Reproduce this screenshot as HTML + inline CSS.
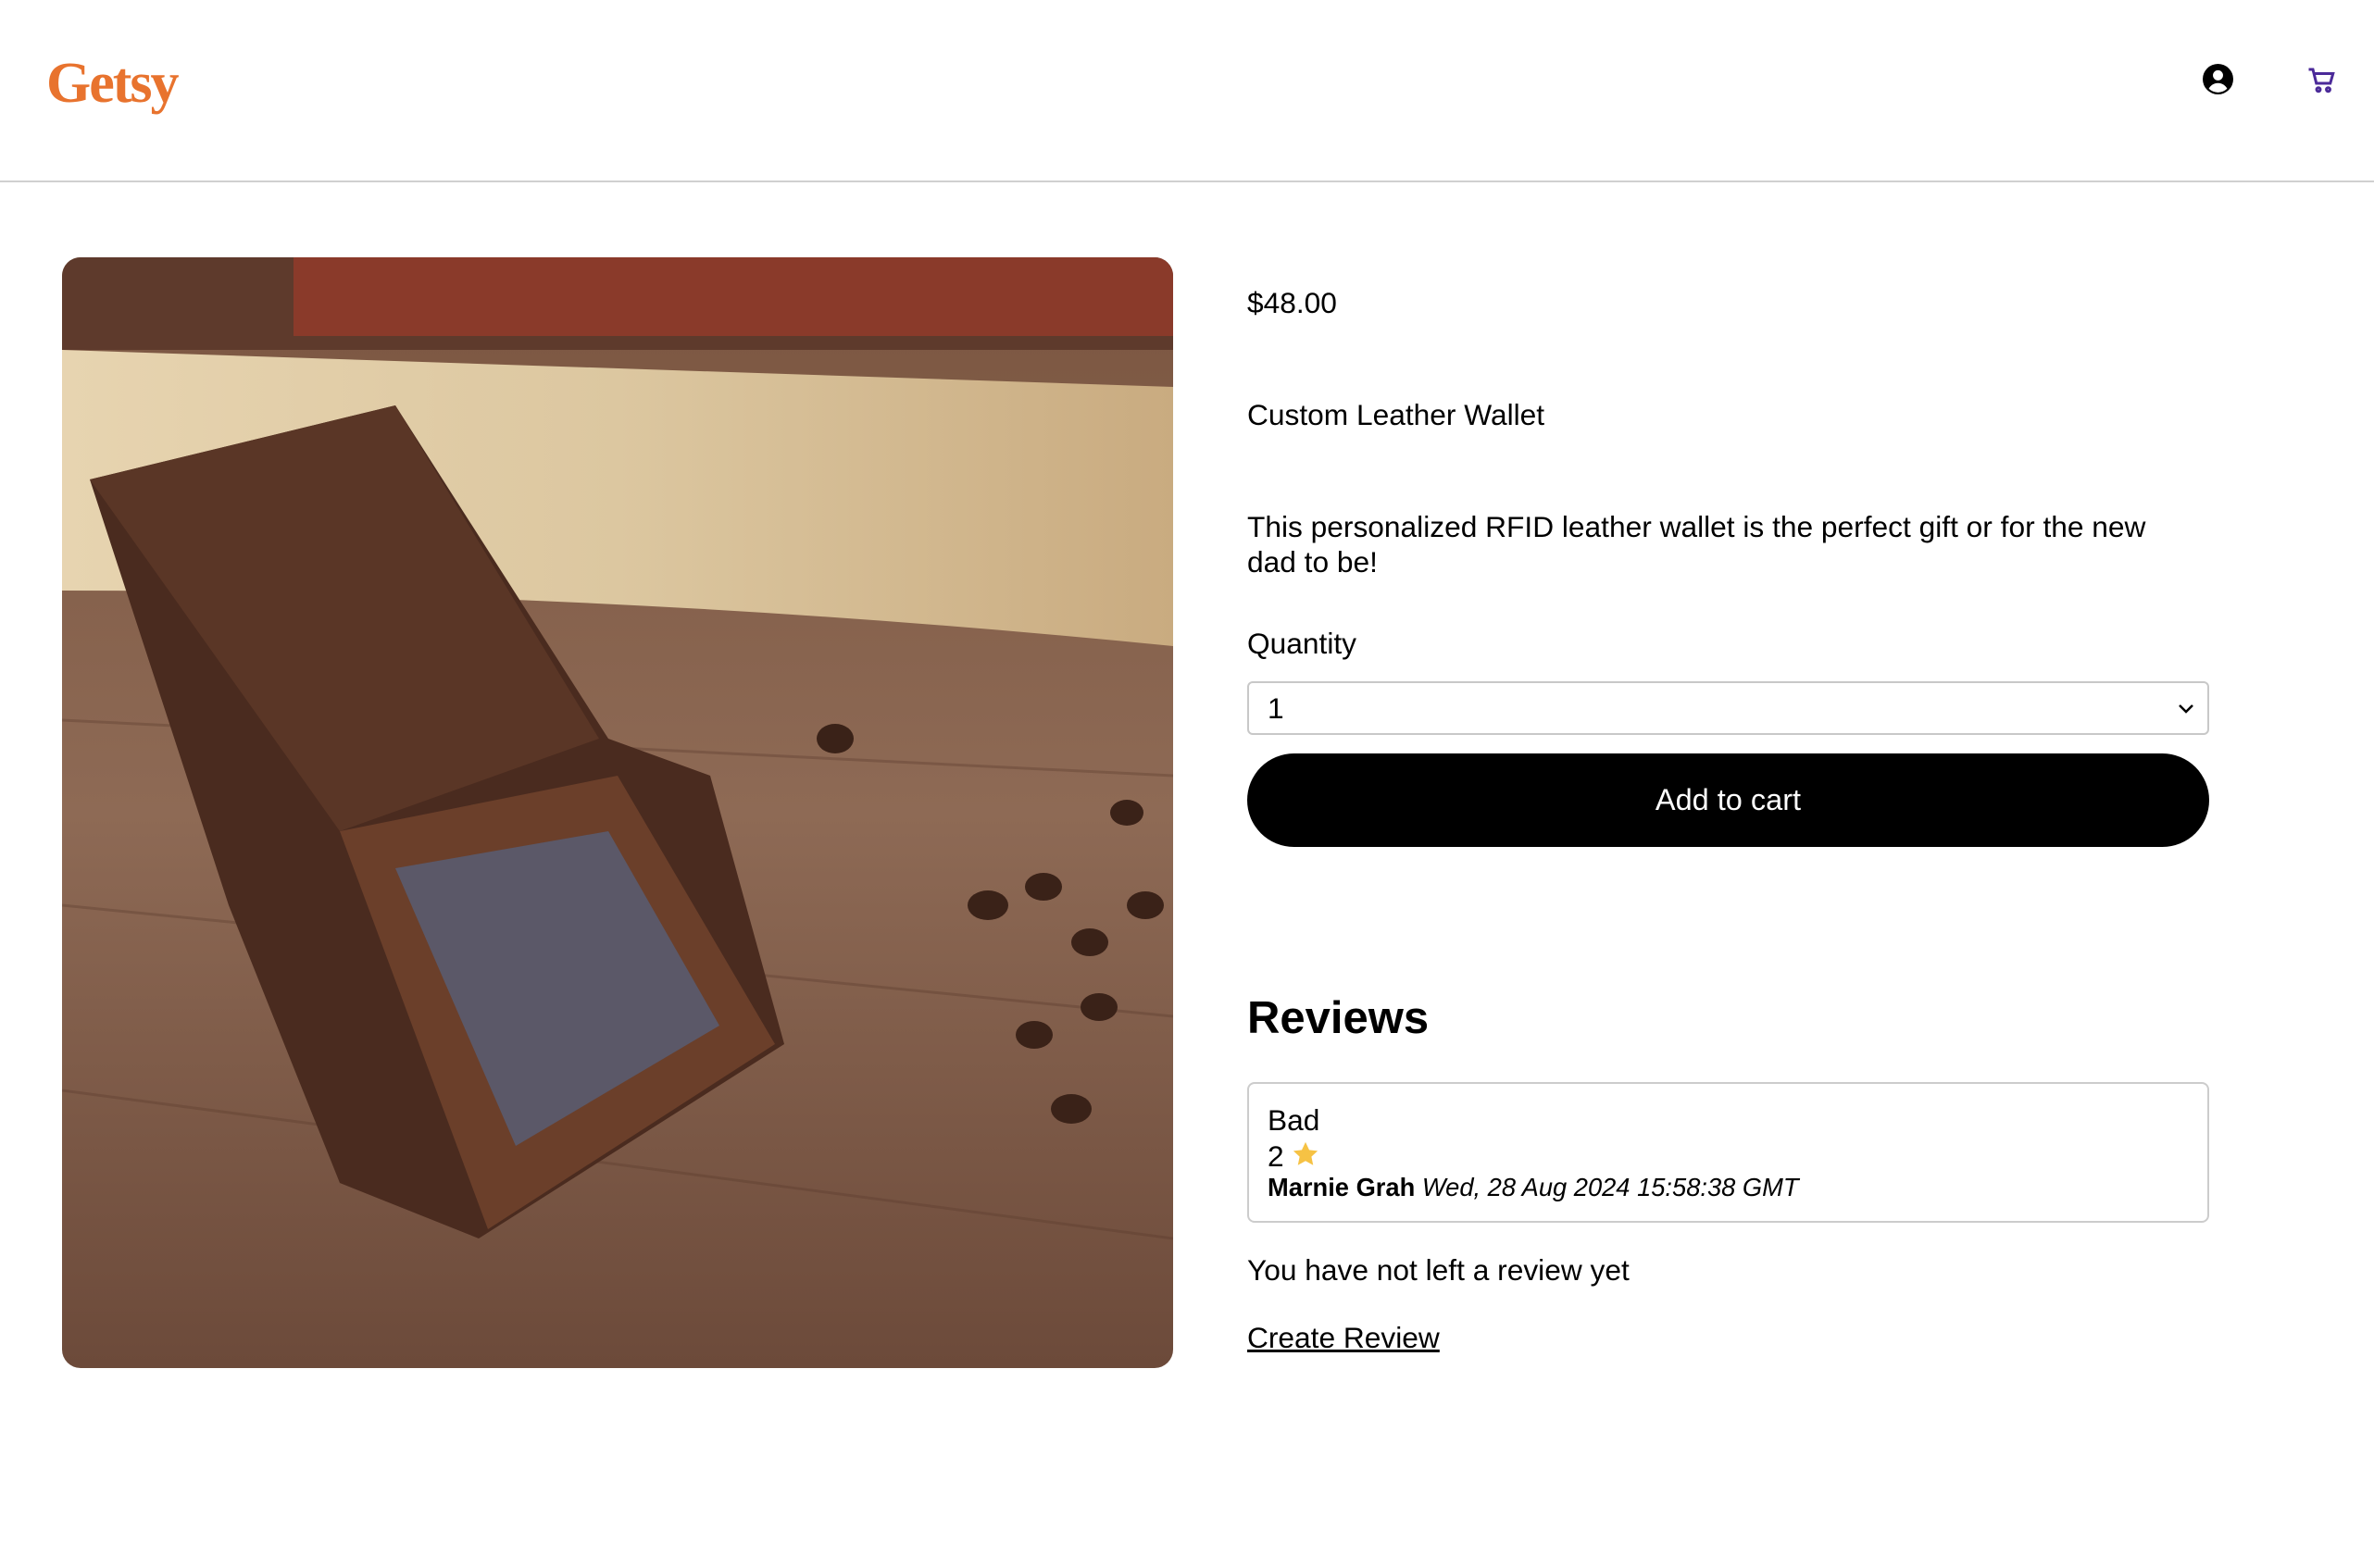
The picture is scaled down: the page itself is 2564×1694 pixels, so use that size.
<!DOCTYPE html>
<html><head><meta charset="utf-8"><style>
*{margin:0;padding:0;box-sizing:border-box}
body{width:2564px;height:1694px;background:#fff;font-family:"Liberation Sans",Arial,sans-serif;color:#000;position:relative;overflow:hidden}
.abs{position:absolute}
.logo{left:50px;top:55px;font-family:"Liberation Serif",serif;font-weight:bold;font-size:62px;color:#e8732e;letter-spacing:-2px}
.hr{left:0;top:195px;width:2564px;height:2px;background:#d0d0d0}
.t{font-size:31.7px;line-height:38px;white-space:nowrap}
.sel{left:1347px;top:736px;width:1039px;height:58px;border:2px solid #c8c8c8;border-radius:6px}
.btn{left:1347px;top:814px;width:1039px;height:101px;border-radius:51px;background:#000;color:#fff;font-size:32.5px;text-align:center;line-height:101px}
.box{left:1347px;top:1169px;width:1039px;height:152px;border:2px solid #ccc;border-radius:8px}
</style></head><body>
<div class="abs logo">Getsy</div>
<svg class="abs" style="left:2379px;top:69px" width="33" height="33" viewBox="0 0 20 20"><circle cx="10" cy="10" r="10" fill="#000"/><circle cx="10" cy="7.5" r="3.3" fill="#fff"/><path d="M4 16.2c1.4-2.4 3.5-3.6 6-3.6s4.6 1.2 6 3.6A8.5 8.5 0 0 1 4 16.2z" fill="#fff"/></svg>
<svg class="abs" style="left:2491px;top:72px" width="32" height="30" viewBox="0 0 20 20" fill="none" stroke="#4b2a99" stroke-width="2"><path d="M1 2h3l2.5 10h10l2-7H5"/><circle cx="8" cy="16.5" r="1.3"/><circle cx="15" cy="16.5" r="1.3"/></svg>
<div class="abs hr"></div>
<svg class="abs" style="left:67px;top:278px;border-radius:20px" width="1200" height="1200" viewBox="0 0 1200 1200">
<defs><linearGradient id="w" x1="0" y1="0" x2="0" y2="1"><stop offset="0" stop-color="#7a5540"/><stop offset=".5" stop-color="#8e6a55"/><stop offset="1" stop-color="#6c4a3a"/></linearGradient>
<linearGradient id="m" x1="0" y1="0" x2="1" y2="0"><stop offset="0" stop-color="#e7d4b0"/><stop offset=".5" stop-color="#dcc7a0"/><stop offset="1" stop-color="#c9ab80"/></linearGradient></defs>
<rect width="1200" height="1200" fill="url(#w)"/>
<rect width="1200" height="100" fill="#5e3a2c"/>
<rect x="250" y="0" width="950" height="85" fill="#8a3a2a"/>
<path d="M0 100 L1200 140 L1200 420 Q600 360 0 360 Z" fill="url(#m)"/>
<g stroke="#5a3a2c" stroke-width="3" opacity=".35"><path d="M0 500 L1200 560"/><path d="M0 700 L1200 820"/><path d="M0 900 L1200 1060"/></g>
<path d="M30 240 L360 160 L590 520 L700 560 L780 850 L450 1060 L300 1000 L180 700 Z" fill="#4a2b1f"/>
<path d="M30 240 L360 160 L580 520 L300 620 Z" fill="#5a3626"/>
<path d="M300 620 L600 560 L770 850 L460 1050 Z" fill="#6b3f2a"/>
<path d="M360 660 L590 620 L710 830 L490 960 Z" fill="#5b5868"/>
<g fill="#3a2218"><ellipse cx="835" cy="520" rx="20" ry="16"/><ellipse cx="1000" cy="700" rx="22" ry="16"/><ellipse cx="1060" cy="680" rx="20" ry="15"/><ellipse cx="1110" cy="740" rx="20" ry="15"/><ellipse cx="1170" cy="700" rx="20" ry="15"/><ellipse cx="1050" cy="840" rx="20" ry="15"/><ellipse cx="1120" cy="810" rx="20" ry="15"/><ellipse cx="1090" cy="920" rx="22" ry="16"/><ellipse cx="1150" cy="600" rx="18" ry="14"/></g>
</svg>
<div class="abs t" style="left:1347px;top:308px">$48.00</div>
<div class="abs t" style="left:1347px;top:429px">Custom Leather Wallet</div>
<div class="abs t" style="left:1347px;top:550px">This personalized RFID leather wallet is the perfect gift or for the new</div>
<div class="abs t" style="left:1347px;top:588px">dad to be!</div>
<div class="abs t" style="left:1347px;top:676px">Quantity</div>
<div class="abs sel"><span class="t" style="position:absolute;left:20px;top:8px">1</span>
<svg style="position:absolute;right:14px;top:20px" width="18" height="14" viewBox="0 0 18 14"><path d="M2 4l7 7 7-7" fill="none" stroke="#000" stroke-width="2.5"/></svg></div>
<div class="abs btn">Add to cart</div>
<div class="abs" style="left:1347px;top:1072px;font-size:49px;font-weight:bold">Reviews</div>
<div class="abs box">
<div class="t" style="position:absolute;left:20px;top:20px">Bad</div>
<div class="t" style="position:absolute;left:20px;top:59px">2 <svg width="30" height="30" viewBox="0 0 24 24" style="vertical-align:-2px"><path d="M12 1.5l3.2 6.8 7.3.8-5.4 5 1.5 7.3L12 17.8l-6.6 3.6 1.5-7.3-5.4-5 7.3-.8z" fill="#f6c244"/></svg></div>
<div style="position:absolute;left:20px;top:96px;font-size:27.3px;white-space:nowrap"><b>Marnie Grah</b> <i>Wed, 28 Aug 2024 15:58:38 GMT</i></div>
</div>
<div class="abs t" style="left:1347px;top:1353px">You have not left a review yet</div>
<div class="abs t" style="left:1347px;top:1426px;text-decoration:underline">Create Review</div>
</body></html>
